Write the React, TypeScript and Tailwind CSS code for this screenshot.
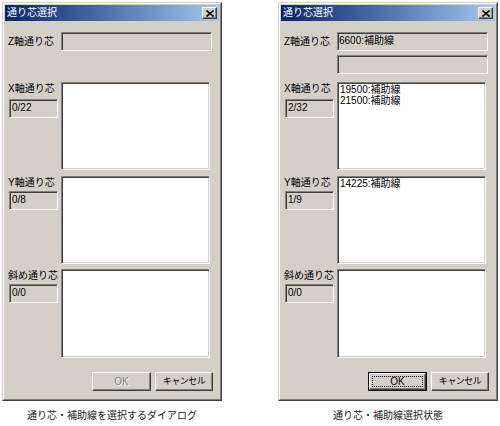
const font = "font-['Liberation_Sans','Noto_Sans_CJK_JP',sans-serif]";
const sunken =
  "border border-t-[#808080] border-l-[#808080] border-b-white border-r-white shadow-[inset_1px_1px_0_#404040,inset_-1px_-1px_0_#d4d0c8]";
const raised =
  "border border-t-white border-l-white border-b-[#404040] border-r-[#404040] shadow-[inset_-1px_-1px_0_#808080,inset_1px_1px_0_#d4d0c8]";

type Group = { count: string; items: string[] };

type DialogProps = {
  z: string;
  showZ2: boolean;
  x: Group;
  y: Group;
  d: Group;
  okActive: boolean;
  caption: string;
};

const ListRow = ({
  label,
  group,
  rowClass,
  listClass,
  countClass,
}: {
  label: string;
  group: Group;
  rowClass: string;
  listClass: string;
  countClass: string;
}) => (
  <div className={`flex ${rowClass}`}>
    <div className="flex flex-col w-[53px]">
      <span className="text-[10px] leading-[14px] text-black whitespace-nowrap">{label}</span>
      <div className={`${sunken} ${countClass} ml-px w-[49px] h-[19px] bg-[#d4d0c8] pl-[2px] text-[10px] leading-[15px] text-black`}>
        {group.count}
      </div>
    </div>
    <div className={`${sunken} ${listClass} w-[149px] bg-white pl-[2px] pt-px text-[10px] leading-[11px] text-black`}>
      {group.items.map((el, index) => (
        <div key={el + index}>{el}</div>
      ))}
    </div>
  </div>
);

const Dialog = ({ z, showZ2, x, y, d, okActive, caption }: DialogProps) => (
  <div className="flex flex-col w-[220px]">
    <div className="h-[399px] border border-t-[#d4d0c8] border-l-[#d4d0c8] border-b-[#404040] border-r-[#404040]">
      <div className="h-full border border-t-white border-l-white border-b-[#808080] border-r-[#808080] bg-[#d4d0c8] p-px flex flex-col">
        <div className="flex items-center justify-between h-[16px] pl-[2px] pr-[2px] bg-gradient-to-r from-[#0a246a] to-[#a6caf0]">
          <span className="text-[10px] leading-[16px] text-white">通り芯選択</span>
          <div className={`${raised} w-[15px] h-[12px] bg-[#d4d0c8] flex items-center justify-center`}>
            <svg width="8" height="7" viewBox="0 0 8 7">
              <path d="M0.5 0.5 L7.5 6.5 M7.5 0.5 L0.5 6.5" stroke="#000" strokeWidth="1.6" />
            </svg>
          </div>
        </div>

        <div className="flex flex-col pl-[3px]">
          <div className="flex items-center mt-[11px]">
            <span className="w-[53px] text-[10px] leading-[14px] text-black">Z軸通り芯</span>
            <div className={`${sunken} w-[151px] h-[19px] bg-[#d4d0c8] pl-px text-[10px] leading-[16px] text-black`}>{z}</div>
          </div>
          <div className={`${sunken} ${showZ2 ? "" : "invisible"} ml-[53px] mt-[4px] w-[151px] h-[19px] bg-[#d4d0c8]`} />

          <ListRow label="X軸通り芯" group={x} rowClass="mt-[8px]" listClass="h-[88px]" countClass="mt-[3px]" />
          <ListRow label="Y軸通り芯" group={y} rowClass="mt-[6px]" listClass="h-[88px]" countClass="mt-px" />
          <ListRow label="斜め通り芯" group={d} rowClass="mt-[5px]" listClass="h-[89px]" countClass="mt-px" />

          <div className="flex gap-[4px] ml-[84px] mt-[14px]">
            {okActive ? (
              <div className="w-[59px] h-[19px] border border-black">
                <div className={`${raised} h-full p-[2px]`}>
                  <div className="h-full border border-dotted border-black flex items-center justify-center text-[10px] text-black">
                    OK
                  </div>
                </div>
              </div>
            ) : (
              <div className={`${raised} w-[59px] h-[19px] flex items-center justify-center text-[10px] text-[#808080] [text-shadow:1px_1px_0_#fff]`}>
                OK
              </div>
            )}
            <div className={`${raised} w-[58px] h-[19px] flex items-center justify-center text-[9px] tracking-[-0.5px] text-black`}>
              キャンセル
            </div>
          </div>
        </div>
      </div>
    </div>
    <p className="mt-[8px] text-center text-[10px] leading-[14px] text-[#222]">{caption}</p>
  </div>
);

export default function App() {
  return (
    <div className={`w-[500px] h-[426px] bg-white flex gap-[56px] pl-[2px] pt-[2px] ${font}`}>
      <Dialog
        z=""
        showZ2={false}
        x={{ count: "0/22", items: [] }}
        y={{ count: "0/8", items: [] }}
        d={{ count: "0/0", items: [] }}
        okActive={false}
        caption="通り芯・補助線を選択するダイアログ"
      />
      <Dialog
        z="6600:補助線"
        showZ2={true}
        x={{ count: "2/32", items: ["19500:補助線", "21500:補助線"] }}
        y={{ count: "1/9", items: ["14225:補助線"] }}
        d={{ count: "0/0", items: [] }}
        okActive={true}
        caption="通り芯・補助線選択状態"
      />
    </div>
  );
}
